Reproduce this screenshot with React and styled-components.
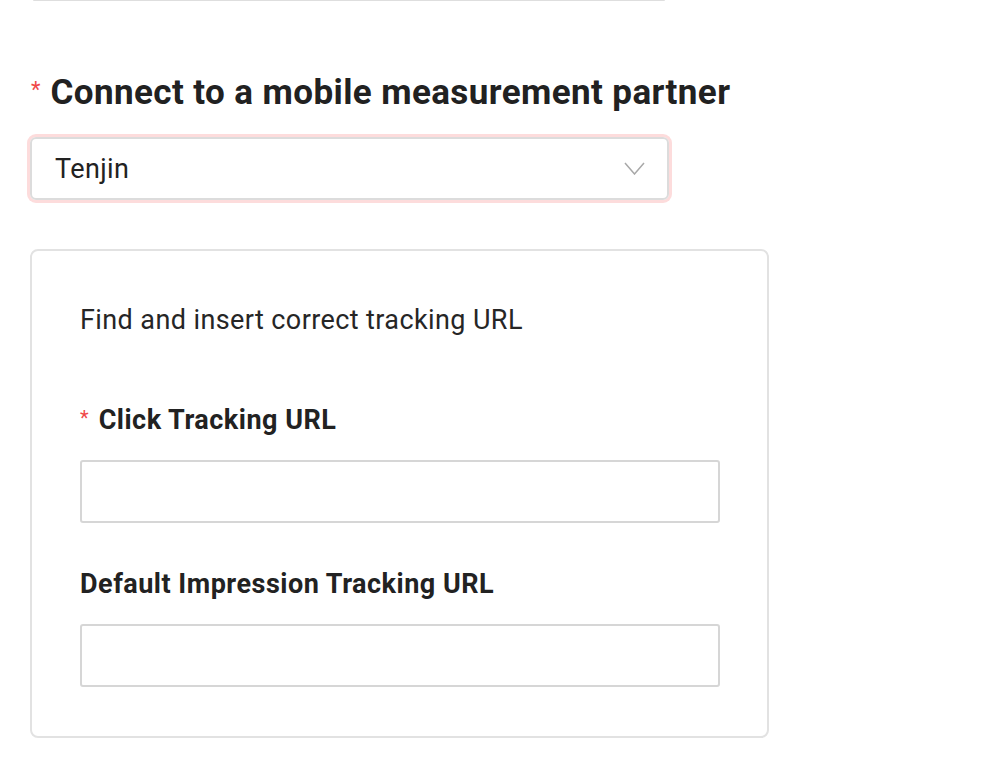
import React from 'react'
import styled, { createGlobalStyle } from 'styled-components'

const GlobalStyle = createGlobalStyle`
  body {
    margin: 0;
    background: #ffffff;
    font-family: Roboto, "Liberation Sans", Arial, sans-serif;
    color: #222222;
  }
`

const Page = styled.div`
  display: flex;
  flex-direction: column;
  align-items: flex-start;
  padding-left: 30px;
`

const PrevField = styled.div`
  margin-left: 3px;
  width: 632px;
  height: 1px;
  background: #dedede;
  border-radius: 0 0 4px 4px;
`

const Heading = styled.div`
  display: flex;
  align-items: center;
  margin-top: 71px;
  margin-left: 1px;
  height: 40px;
  font-size: 35px;
  font-weight: 700;
  letter-spacing: 0.4px;
  color: #212121;
`

const Required = styled.span`
  color: #f04848;
  font-size: ${(p) => p.size || 20}px;
  font-weight: 400;
  margin-right: ${(p) => p.gap || 10}px;
  align-self: flex-start;
  margin-top: ${(p) => p.top || 8}px;
  letter-spacing: 0;
`

const Select = styled.div`
  margin-top: 25px;
  box-sizing: border-box;
  width: 639px;
  height: 63px;
  border: 2px solid #dcdcdc;
  border-radius: 6px;
  box-shadow: 0 0 0 3px #fddcdc;
  display: flex;
  align-items: center;
  justify-content: space-between;
  padding: 0 22px 0 23px;
  font-size: 27px;
  letter-spacing: 0.4px;
  color: #222222;
`

const Chevron = styled.svg`
  width: 21px;
  height: 13px;
`

const Card = styled.div`
  margin-top: 49px;
  box-sizing: border-box;
  width: 739px;
  border: 2px solid #e2e2e2;
  border-radius: 8px;
  padding: 53px 48px 49px 48px;
  display: flex;
  flex-direction: column;
`

const Description = styled.div`
  height: 32px;
  line-height: 32px;
  font-size: 27px;
  letter-spacing: 0.4px;
  color: #262626;
`

const Label = styled.div`
  display: flex;
  align-items: center;
  height: 32px;
  margin-top: ${(p) => p.top}px;
  font-size: 27px;
  font-weight: 700;
  letter-spacing: 0.5px;
  color: #222222;
`

const Input = styled.div`
  margin-top: 24px;
  box-sizing: border-box;
  width: 640px;
  height: 63px;
  border: 2px solid #d6d6d6;
  border-radius: 3px;
  background: #ffffff;
`

const App = () => {
  return (
    <>
      <GlobalStyle />
      <Page>
        <PrevField />
        <Heading>
          <Required size={22} gap={10} top={5}>*</Required>
          Connect to a mobile measurement partner
        </Heading>
        <Select>
          <span>Tenjin</span>
          <Chevron viewBox="0 0 21 13">
            <polyline points="1,1 10.5,12 20,1" fill="none" stroke="#a8a8a8" strokeWidth="1.5" />
          </Chevron>
        </Select>
        <Card>
          <Description>Find and insert correct tracking URL</Description>
          <Label top={68}>
            <Required size={20} gap={10} top={2}>*</Required>
            Click Tracking URL
          </Label>
          <Input />
          <Label top={45}>Default Impression Tracking URL</Label>
          <Input />
        </Card>
      </Page>
    </>
  )
}

export default App
